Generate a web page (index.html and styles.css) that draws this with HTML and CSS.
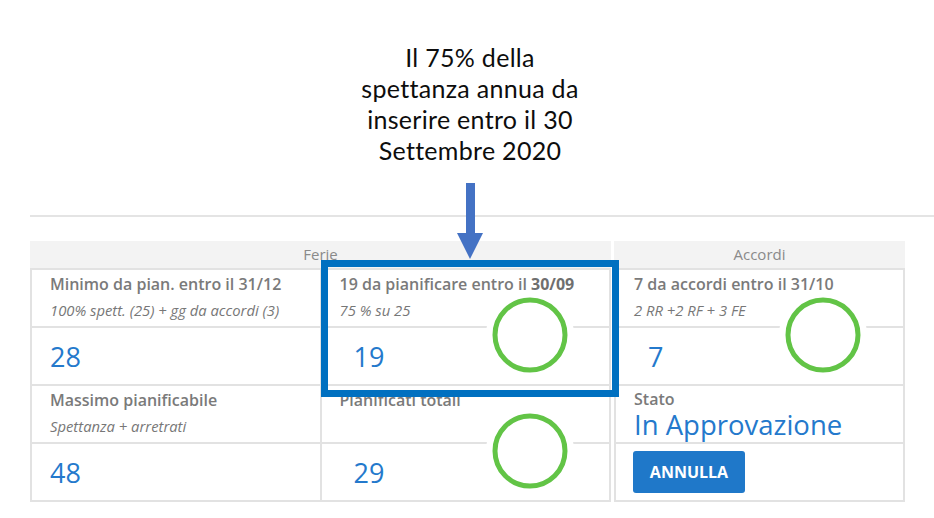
FILE: index.html
```html
<!DOCTYPE html>
<html lang="it">
<head>
<meta charset="utf-8">
<title>Ferie</title>
<link rel="stylesheet" href="styles.css">
</head>
<body>
<div class="page">
  <p class="callout">Il 75% della<br>spettanza annua da<br>inserire entro il 30<br>Settembre 2020</p>
  <div class="rule"></div>
  <div class="tables">
    <section class="tbl ferie">
      <div class="hd">Ferie</div>
      <div class="grid two">
        <div class="cell lab"><div class="t">Minimo da pian. entro il 31/12</div><div class="s">100% spett. (25) + gg da accordi (3)</div></div>
        <div class="cell lab"><div class="t">19 da pianificare entro il <b>30/09</b></div><div class="s">75 % su 25</div></div>
        <div class="cell val">28</div>
        <div class="cell val ind">19</div>
        <div class="cell lab"><div class="t">Massimo pianificabile</div><div class="s">Spettanza + arretrati</div></div>
        <div class="cell lab"><div class="t">Pianificati totali</div></div>
        <div class="cell val">48</div>
        <div class="cell val ind">29</div>
      </div>
    </section>
    <section class="tbl accordi">
      <div class="hd">Accordi</div>
      <div class="grid one">
        <div class="cell lab"><div class="t">7 da accordi entro il 31/10</div><div class="s">2 RR +2 RF + 3 FE</div></div>
        <div class="cell val ind">7</div>
        <div class="cell lab"><div class="t st">Stato</div><div class="state">In Approvazione</div></div>
        <div class="cell btncell"><button class="btn" type="button">ANNULLA</button></div>
      </div>
    </section>
  </div>

  <svg class="arrow" width="26" height="76" viewBox="0 0 26 76" aria-hidden="true">
    <rect x="9" y="0" width="9" height="51" fill="#4472c4"/>
    <polygon points="0,50 26,50 13,76" fill="#4472c4"/>
  </svg>
  <div class="highlight"></div>
  <svg class="ring ring-a" width="88" height="88" viewBox="0 0 88 88" aria-hidden="true">
    <circle cx="44" cy="44" r="44" fill="#fff"/>
    <circle cx="44" cy="44" r="35" fill="none" stroke="#62c446" stroke-width="5"/>
  </svg>
  <svg class="ring ring-b" width="88" height="88" viewBox="0 0 88 88" aria-hidden="true">
    <circle cx="44" cy="44" r="44" fill="#fff"/>
    <circle cx="44" cy="44" r="35" fill="none" stroke="#62c446" stroke-width="5"/>
  </svg>
  <svg class="ring ring-c" width="88" height="88" viewBox="0 0 88 88" aria-hidden="true">
    <circle cx="44" cy="44" r="44" fill="#fff"/>
    <circle cx="44" cy="44" r="35" fill="none" stroke="#62c446" stroke-width="5"/>
  </svg>
</div>
</body>
</html>
```
FILE: styles.css
```css
html, body {
  margin: 0;
  padding: 0;
  background: #fff;
}
.page {
  position: relative;
  width: 934px;
  height: 518px;
  overflow: hidden;
  font-family: "Open Sans", "Noto Sans", sans-serif;
}
.callout {
  margin: 42px 0 0 320px;
  width: 300px;
  text-align: center;
  font-family: Lato, "Liberation Sans", sans-serif;
  font-size: 25px;
  line-height: 31px;
  letter-spacing: 0.3px;
  color: #0d0d0d;
}
.rule {
  margin: 49px 0 0 30px;
  border-top: 2px solid #e4e4e4;
}
.tables {
  display: flex;
  gap: 3px;
  margin: 24px 0 0 30px;
}
.tbl {
  background: #e2e2e2;
  padding: 0 2px 2px;
}
.ferie { width: 577px; }
.accordi { width: 287px; }
.hd {
  margin: 0 -2px;
  height: 27px;
  line-height: 27px;
  background: #f3f3f3;
  text-align: center;
  font-size: 15px;
  color: #8a8a8a;
}
.grid {
  display: grid;
  gap: 2px;
  margin-top: 2px;
  grid-auto-rows: 56px;
}
.two { grid-template-columns: 1fr 1fr; }
.one { grid-template-columns: 1fr; }
.cell {
  background: #fff;
  padding-left: 18px;
  min-width: 0;
}
.lab { padding-top: 3px; }
.t {
  font-size: 16px;
  line-height: 22px;
  font-weight: 600;
  color: #7a7a7a;
  white-space: nowrap;
}
.t b { font-weight: 700; color: #6f6f6f; }
.st { line-height: 20px; }
.s {
  margin-top: 3px;
  font-size: 14.8px;
  line-height: 24px;
  font-style: italic;
  color: #777;
  white-space: nowrap;
}
.val {
  display: flex;
  align-items: center;
  font-size: 27px;
  color: #2479cc;
}
.val.ind { padding-left: 32px; }
.state {
  margin-top: 2px;
  font-size: 27.5px;
  line-height: 28px;
  color: #2479cc;
  white-space: nowrap;
}
.btncell {
  display: flex;
  align-items: center;
  padding-left: 17px;
}
.btn {
  width: 112px;
  height: 42px;
  border: 0;
  border-radius: 3px;
  background: #1f78c9;
  color: #fff;
  font-family: "Open Sans", "Noto Sans", sans-serif;
  font-size: 16px;
  font-weight: 700;
  padding: 0;
}
.arrow {
  position: absolute;
  left: 457px;
  top: 183px;
}
.highlight {
  position: absolute;
  left: 321px;
  top: 260px;
  width: 284px;
  height: 123px;
  border: 7px solid #0070c0;
}
.ring {
  position: absolute;
}
.ring-a { left: 486px; top: 291px; }
.ring-b { left: 779px; top: 291px; }
.ring-c { left: 486px; top: 407px; }
```
